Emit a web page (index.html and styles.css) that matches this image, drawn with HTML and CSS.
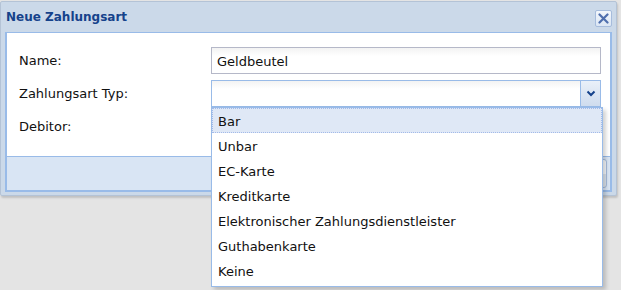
FILE: index.html
```html
<!DOCTYPE html>
<html lang="de">
<head>
    <meta charset="UTF-8">
    <title>Neue Zahlungsart</title>
    <link rel="stylesheet" href="styles.css">
</head>
<body>
    <div class="window">
        <div class="window-header">
            <span class="window-title">Neue Zahlungsart</span>
            <span class="close-btn">
                <svg width="11" height="11" viewBox="0 0 11 11">
                    <path d="M1.5 1.5 L9.5 9.5 M9.5 1.5 L1.5 9.5" stroke="#4f6fae" stroke-width="2.2" stroke-linecap="round"/>
                </svg>
            </span>
        </div>
        <div class="window-frame">
            <div class="window-body">
                <div class="form-row">
                    <label class="form-label">Name:</label>
                    <div class="field">
                        <input type="text" class="text-input" value="Geldbeutel">
                    </div>
                </div>
                <div class="form-row">
                    <label class="form-label">Zahlungsart Typ:</label>
                    <div class="field combo">
                        <input type="text" class="text-input combo-input" value="">
                        <span class="combo-trigger">
                            <svg width="10" height="7" viewBox="0 0 10 7">
                                <path d="M1.5 1.5 L5 5 L8.5 1.5" stroke="#15428b" stroke-width="2" fill="none"/>
                            </svg>
                        </span>
                        <!-- geöffnete Liste -->
                        <ul class="combo-list">
                            <li class="selected">Bar</li>
                            <li>Unbar</li>
                            <li>EC-Karte</li>
                            <li>Kreditkarte</li>
                            <li>Elektronischer Zahlungsdienstleister</li>
                            <li>Guthabenkarte</li>
                            <li>Keine</li>
                        </ul>
                    </div>
                </div>
                <div class="form-row">
                    <label class="form-label">Debitor:</label>
                    <div class="field"></div>
                </div>
            </div>
            <div class="window-footer">
                <span class="footer-btn"></span>
            </div>
        </div>
    </div>
</body>
</html>
```

FILE: styles.css
```css
body {
    margin: 0;
    background-color: #e4e4e4;
    font-family: "DejaVu Sans", "Liberation Sans", sans-serif;
    height: 290px;
    overflow: hidden;
}

.window {
    width: 617px;
    margin-top: 1px;
    background-color: #cbd9e9;
    border: 1px solid #b4c3d6;
    border-radius: 2px;
    padding: 0 3px 3px 3px;
    box-sizing: border-box;
    box-shadow: 1px 2px 2px rgba(0, 0, 0, 0.15);
}

.window-header {
    display: flex;
    justify-content: space-between;
    align-items: center;
    height: 30px;
    padding: 0 1px 0 2px;
}

.window-title {
    color: #15428b;
    font-weight: bold;
    font-size: 12px;
}

.close-btn {
    display: flex;
    justify-content: center;
    align-items: center;
    width: 15px;
    height: 15px;
    border: 1px solid #a6bcdc;
    border-radius: 2px;
    background: linear-gradient(#f3f7fc, #dbe6f4);
    margin-top: 2px;
}

.window-frame {
    border: 2px solid #99bbe8;
    border-top-width: 1px;
    margin: 0 1px;
}

.window-body {
    background-color: white;
    padding: 14px 0 9px 0;
    height: 100px;
}

.form-row {
    display: flex;
    align-items: center;
    height: 27px;
    margin-bottom: 6px;
}

.form-label {
    width: 192px;
    padding-left: 12px;
    font-size: 13px;
    color: #111;
}

.field {
    width: 390px;
    height: 27px;
}

.text-input {
    width: 100%;
    height: 27px;
    box-sizing: border-box;
    border: 1px solid #b5b8c8;
    background: linear-gradient(#f3f3f3, #fff 8px);
    font-family: "DejaVu Sans", sans-serif;
    font-size: 13px;
    padding: 2px 5px 0 5px;
    color: #111;
}

.combo {
    position: relative;
}

.combo-input {
    border-color: #99bbe8;
}

.combo-trigger {
    position: absolute;
    right: 0;
    top: 0;
    width: 21px;
    height: 27px;
    box-sizing: border-box;
    border: 1px solid #99bbe8;
    background: linear-gradient(#e9f0f9, #cfdcee);
    display: flex;
    justify-content: center;
    align-items: center;
}

.combo-list {
    position: absolute;
    left: 0;
    top: 27px;
    width: 392px;
    margin: 0;
    padding: 0 0 3px 0;
    list-style: none;
    background-color: white;
    border: 1px solid #99bbe8;
    box-sizing: border-box;
    box-shadow: 3px 3px 4px rgba(0, 0, 0, 0.18);
    z-index: 5;
}

.combo-list li {
    height: 25px;
    line-height: 25px;
    padding-left: 5px;
    font-size: 13px;
    color: #111;
    border: 1px solid transparent;
    box-sizing: border-box;
}

.combo-list li.selected {
    background-color: #dfe8f6;
    border: 1px dotted #a3bae9;
}

.window-footer {
    height: 33px;
    border-top: 1px solid #99bbe8;
    background-color: #d9e5f4;
    display: flex;
    justify-content: flex-end;
    align-items: center;
    padding-right: 3px;
}

.footer-btn {
    width: 70px;
    height: 27px;
    border: 1px solid #a6bcdc;
    border-radius: 3px;
    background: linear-gradient(#f5f8fc 50%, #dde5ee 50%);
}
```
